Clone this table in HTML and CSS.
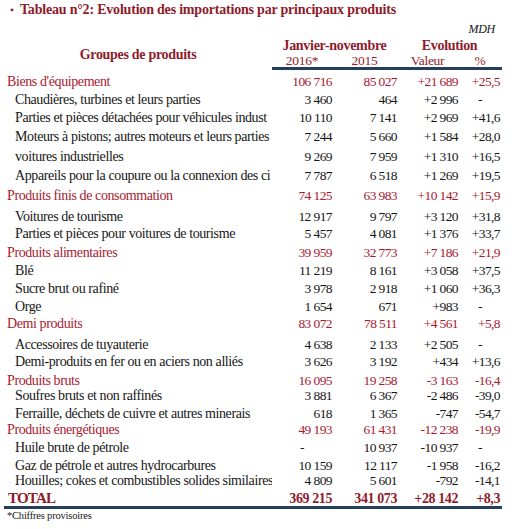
FILE: index.html
```html
<!DOCTYPE html>
<html lang="fr">
<head>
    <meta charset="UTF-8">
    <meta name="viewport" content="width=device-width, initial-scale=1.0">
    <title>Tableau n°2 - Importations</title>
    <link rel="stylesheet" href="styles.css">
</head>
<body>
    <div class="sheet">
        <h1 class="title"><span class="bullet">▪</span>Tableau n°2: Evolution des importations par principaux produits</h1>
        <p class="unit">MDH</p>

        <table class="imports">
            <colgroup>
                <col class="col-label">
                <col class="col-y1">
                <col class="col-y2">
                <col class="col-val">
                <col class="col-pct">
            </colgroup>
            <thead>
                <tr class="head-top">
                    <th rowspan="2" class="groups">Groupes de produits</th>
                    <th colspan="2">Janvier-novembre</th>
                    <th colspan="2">Evolution</th>
                </tr>
                <tr class="head-sub">
                    <th>2016*</th>
                    <th>2015</th>
                    <th>Valeur</th>
                    <th>%</th>
                </tr>
            </thead>
            <tbody>
                <tr class="cat first">
                    <td>Biens d'équipement</td>
                    <td>106 716</td><td>85 027</td><td>+21 689</td><td>+25,5</td>
                </tr>
                <tr>
                    <td>Chaudières, turbines et leurs parties</td>
                    <td>3 460</td><td>464</td><td>+2 996</td><td class="na">-</td>
                </tr>
                <tr class="h19">
                    <td>Parties et pièces détachées pour véhicules indust</td>
                    <td>10 110</td><td>7 141</td><td>+2 969</td><td>+41,6</td>
                </tr>
                <tr class="h20">
                    <td>Moteurs à pistons; autres moteurs et leurs parties</td>
                    <td>7 244</td><td>5 660</td><td>+1 584</td><td>+28,0</td>
                </tr>
                <tr class="h19">
                    <td>voitures industrielles</td>
                    <td>9 269</td><td>7 959</td><td>+1 310</td><td>+16,5</td>
                </tr>
                <tr class="h20">
                    <td>Appareils pour la coupure ou la connexion des ci</td>
                    <td>7 787</td><td>6 518</td><td>+1 269</td><td>+19,5</td>
                </tr>
                <tr class="cat h21">
                    <td>Produits finis de consommation</td>
                    <td>74 125</td><td>63 983</td><td>+10 142</td><td>+15,9</td>
                </tr>
                <tr class="h17">
                    <td>Voitures de tourisme</td>
                    <td>12 917</td><td>9 797</td><td>+3 120</td><td>+31,8</td>
                </tr>
                <tr class="h19">
                    <td>Parties et pièces pour voitures de tourisme</td>
                    <td>5 457</td><td>4 081</td><td>+1 376</td><td>+33,7</td>
                </tr>
                <tr class="cat">
                    <td>Produits alimentaires</td>
                    <td>39 959</td><td>32 773</td><td>+7 186</td><td>+21,9</td>
                </tr>
                <tr>
                    <td>Blé</td>
                    <td>11 219</td><td>8 161</td><td>+3 058</td><td>+37,5</td>
                </tr>
                <tr>
                    <td>Sucre brut ou rafiné</td>
                    <td>3 978</td><td>2 918</td><td>+1 060</td><td>+36,3</td>
                </tr>
                <tr class="h17">
                    <td>Orge</td>
                    <td>1 654</td><td>671</td><td>+983</td><td class="na">-</td>
                </tr>
                <tr class="cat h21">
                    <td>Demi produits</td>
                    <td>83 072</td><td>78 511</td><td>+4 561</td><td>+5,8</td>
                </tr>
                <tr class="h17">
                    <td>Accessoires de tuyauterie</td>
                    <td>4 638</td><td>2 133</td><td>+2 505</td><td class="na">-</td>
                </tr>
                <tr class="h19">
                    <td>Demi-produits en fer ou en aciers non alliés</td>
                    <td>3 626</td><td>3 192</td><td>+434</td><td>+13,6</td>
                </tr>
                <tr class="cat h15">
                    <td>Produits bruts</td>
                    <td>16 095</td><td>19 258</td><td>-3 163</td><td>-16,4</td>
                </tr>
                <tr>
                    <td>Soufres bruts et non raffinés</td>
                    <td>3 881</td><td>6 367</td><td>-2 486</td><td>-39,0</td>
                </tr>
                <tr class="h16">
                    <td>Ferraille, déchets de cuivre et autres minerais</td>
                    <td>618</td><td>1 365</td><td>-747</td><td>-54,7</td>
                </tr>
                <tr class="cat">
                    <td>Produits énergétiques</td>
                    <td>49 193</td><td>61 431</td><td>-12 238</td><td>-19,9</td>
                </tr>
                <tr>
                    <td>Huile brute de pétrole</td>
                    <td class="na">-</td><td>10 937</td><td>-10 937</td><td class="na">-</td>
                </tr>
                <tr class="h15">
                    <td>Gaz de pétrole et autres hydrocarbures</td>
                    <td>10 159</td><td>12 117</td><td>-1 958</td><td>-16,2</td>
                </tr>
                <tr>
                    <td>Houilles; cokes et combustibles solides similaires</td>
                    <td>4 809</td><td>5 601</td><td>-792</td><td>-14,1</td>
                </tr>
                <tr class="total">
                    <td>TOTAL</td>
                    <td>369 215</td><td>341 073</td><td>+28 142</td><td>+8,3</td>
                </tr>
            </tbody>
        </table>

        <p class="note">*Chiffres provisoires</p>
    </div>
</body>
</html>
```

FILE: styles.css
```css
body { margin: 0; background: #ffffff; font-family: "Liberation Serif", "Times New Roman", serif; color: #161616; }
.sheet { width: 498px; padding-left: 4px; }

.title { margin: 0; font-size: 14px; line-height: 20px; font-weight: bold; color: #8e1b2b; letter-spacing: -0.2px; white-space: nowrap; }
.title .bullet { display: inline-block; width: 16px; text-align: center; font-size: 10px; vertical-align: top; }
.unit { margin: 2px 0 0; padding-right: 7px; text-align: right; font-size: 12px; line-height: 14px; font-style: italic; letter-spacing: -0.3px; }

.imports { width: 498px; table-layout: fixed; border-collapse: separate; border-spacing: 0; }
.col-label { width: 268px; }
.col-y1 { width: 60px; }
.col-y2 { width: 65px; }
.col-val { width: 61px; }
.col-pct { width: 44px; }

.imports th { padding: 0; color: #8e1b2b; font-size: 14px; letter-spacing: -0.3px; text-align: center; }
.head-top th { height: 17px; line-height: 15px; vertical-align: bottom; }
.head-top .groups { vertical-align: middle; padding-top: 2px; }
.head-sub th { height: 12px; padding-top: 2px; line-height: 12px; font-size: 13.5px; font-weight: normal; vertical-align: top; border-bottom: 3px solid #243f5e; }

.imports td { height: 18px; padding: 0; font-size: 13.5px; line-height: 15px; vertical-align: top; text-align: right; letter-spacing: -0.6px; white-space: nowrap; }
.imports td:first-child { padding-left: 11px; font-size: 14px; letter-spacing: -0.4px; text-align: left; overflow: hidden; }
.imports td:last-child { padding-right: 2px; }
.imports td.na { text-align: center; padding-right: 0; }

.imports tr.first td { padding-top: 4px; }
.imports tr.h15 td { height: 15px; }
.imports tr.h16 td { height: 16px; }
.imports tr.h17 td { height: 17px; }
.imports tr.h19 td { height: 19px; }
.imports tr.h20 td { height: 20px; }
.imports tr.h21 td { height: 21px; }

.cat td { color: #a8192f; }
.imports .cat td:first-child { padding-left: 3px; }

.total td { height: 15px; color: #8e1b2b; font-weight: bold; font-size: 14px; letter-spacing: -0.4px; border-bottom: 3px solid #243f5e; }
.imports .total td:first-child { padding-left: 4px; font-size: 15px; letter-spacing: -0.8px; }

.note { margin: 1px 0 0 3px; font-size: 10.5px; line-height: 11px; letter-spacing: -0.2px; }
```
